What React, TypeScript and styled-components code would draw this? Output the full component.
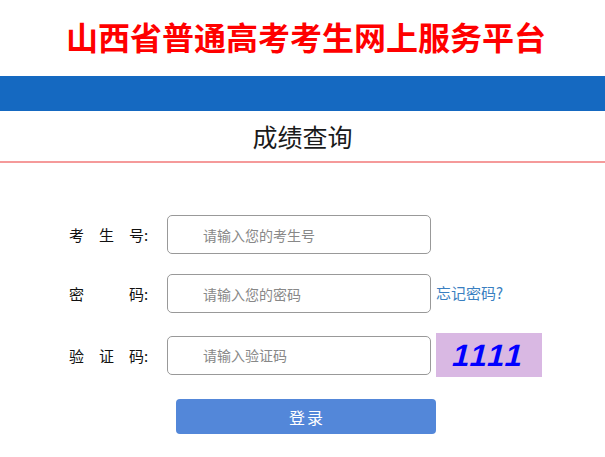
import styled, { createGlobalStyle } from "styled-components";

const GlobalStyle = createGlobalStyle`
  html, body {
    margin: 0;
    padding: 0;
    background: #fff;
    font-family: "Noto Sans CJK SC", "Noto Sans", sans-serif;
  }
  * { box-sizing: border-box; }
`;

const Header = styled.header`
  height: 76px;
  display: flex;
  align-items: center;
  justify-content: center;
  padding: 0 0 4px 7px;
`;

const Title = styled.h1`
  margin: 0;
  font-size: 32px;
  font-weight: 700;
  color: #ff0000;
  line-height: 1;
`;

const Bar = styled.div`
  height: 35px;
  background: #1569c1;
`;

const SubHeader = styled.div`
  height: 52px;
  display: flex;
  align-items: center;
  justify-content: center;
  border-bottom: 2px solid #f59a9a;
`;

const SubTitle = styled.h2`
  margin: 0;
  font-size: 25px;
  font-weight: 400;
  color: #1a1a1a;
  line-height: 1;
`;

const Form = styled.form`
  display: flex;
  flex-direction: column;
  gap: 20px;
  padding: 52px 0 0 69px;
`;

const Row = styled.div`
  display: flex;
  align-items: center;
`;

const Label = styled.label`
  width: 98px;
  font-size: 15px;
  color: #111;
  white-space: pre;
`;

const Input = styled.input`
  width: 264px;
  height: 39px;
  border: 1px solid #999;
  border-radius: 5px;
  padding: 0 0 0 35px;
  font-family: inherit;
  font-size: 14px;
  color: #333;
  outline: none;
  &::placeholder {
    color: #888;
  }
`;

const Forgot = styled.a`
  margin-left: 5px;
  margin-top: -3px;
  font-size: 15px;
  color: #3a7fc1;
  text-decoration: none;
`;

const Captcha = styled.div`
  margin-left: 5px;
  width: 106px;
  height: 44px;
  background: #d9b8e3;
  display: flex;
  align-items: center;
  justify-content: center;
`;

const CaptchaText = styled.span`
  display: inline-block;
  font-family: "Liberation Sans", Arial, Helvetica, sans-serif;
  font-size: 31px;
  font-weight: 700;
  font-style: normal;
  color: #0000ff;
  letter-spacing: 2px;
  line-height: 1;
  transform: skewX(-14deg);
`;

const SubmitRow = styled.div`
  padding-left: 107px;
  margin-top: 2px;
`;

const Submit = styled.button`
  width: 260px;
  height: 35px;
  border: none;
  border-radius: 4px;
  background: #5387d9;
  color: #fff;
  font-family: inherit;
  font-size: 16px;
  letter-spacing: 2px;
  text-indent: 2px;
  cursor: pointer;
`;

export default function App() {
  return (
    <>
      <GlobalStyle />
      <Header>
        <Title>山西省普通高考考生网上服务平台</Title>
      </Header>
      <Bar />
      <SubHeader>
        <SubTitle>成绩查询</SubTitle>
      </SubHeader>
      <Form onSubmit={(e) => e.preventDefault()}>
        <Row>
          <Label>{"考\u3000生\u3000号:"}</Label>
          <Input placeholder="请输入您的考生号" />
        </Row>
        <Row>
          <Label>{"密\u3000\u3000\u3000码:"}</Label>
          <Input type="password" placeholder="请输入您的密码" />
          <Forgot href="#">忘记密码?</Forgot>
        </Row>
        <Row>
          <Label>{"验\u3000证\u3000码:"}</Label>
          <Input placeholder="请输入验证码" />
          <Captcha>
            <CaptchaText>1111</CaptchaText>
          </Captcha>
        </Row>
        <SubmitRow>
          <Submit type="submit">登录</Submit>
        </SubmitRow>
      </Form>
    </>
  );
}
